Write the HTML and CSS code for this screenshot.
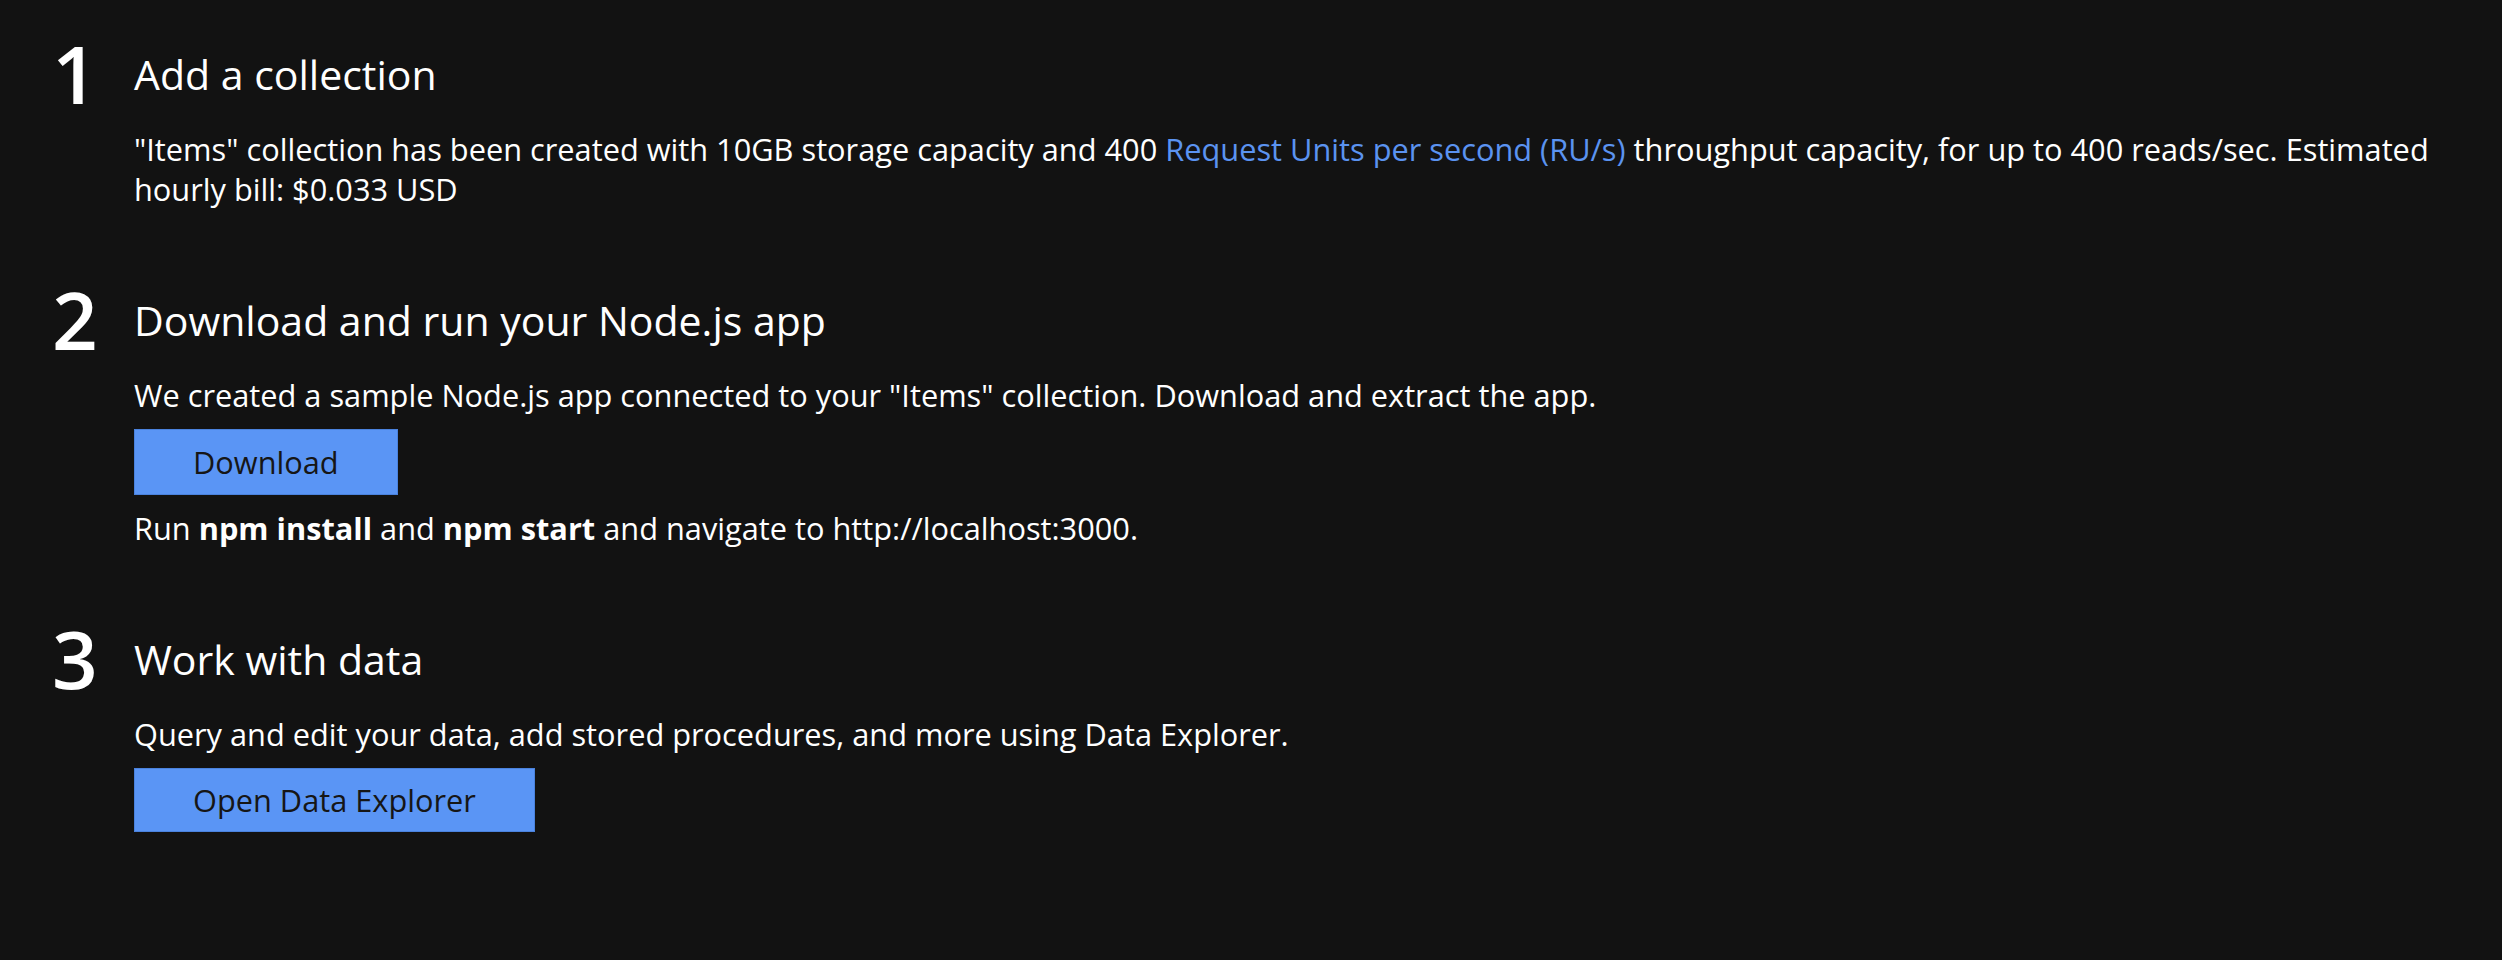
FILE: index.html
```html
<!DOCTYPE html>
<html lang="en">
<head>
<meta charset="utf-8">
<title>Quick start</title>
<link rel="stylesheet" href="styles.css">
</head>
<body>
<main class="page">
  <section class="step">
    <div class="num">1</div>
    <div class="content">
      <h2 class="title">Add a collection</h2>
      <p class="text">"Items" collection has been created with 10GB storage capacity and 400 <a class="link" href="#">Request Units per second (RU/s)</a> throughput capacity, for up to 400 reads/sec. Estimated hourly bill: $0.033 USD</p>
    </div>
  </section>
  <section class="step">
    <div class="num">2</div>
    <div class="content">
      <h2 class="title">Download and run your Node.js app</h2>
      <p class="text">We created a sample Node.js app connected to your "Items" collection. Download and extract the app.</p>
      <button class="btn btn-download" type="button">Download</button>
      <p class="text text-after">Run <strong class="strong">npm install</strong> and <strong class="strong">npm start</strong> and navigate to http://localhost:3000.</p>
    </div>
  </section>
  <section class="step">
    <div class="num">3</div>
    <div class="content">
      <h2 class="title">Work with data</h2>
      <p class="text">Query and edit your data, add stored procedures, and more using Data Explorer.</p>
      <button class="btn btn-explorer" type="button">Open Data Explorer</button>
    </div>
  </section>
</main>
</body>
</html>
```
FILE: styles.css
```css
html, body {
  margin: 0;
  padding: 0;
  background: #121212;
}

body {
  font-family: "Open Sans", "Noto Sans", sans-serif;
  color: #ffffff;
  width: 2502px;
  height: 960px;
  overflow: hidden;
}

.page {
  display: flex;
  flex-direction: column;
  gap: 70px;
  padding: 33px 50px 0 52px;
}

.step {
  display: grid;
  grid-template-columns: 82px 1fr;
  align-items: start;
}

.num {
  font-size: 80px;
  line-height: 80px;
  font-weight: 600;
  color: #ffffff;
}

.content {
  display: flex;
  flex-direction: column;
  align-items: flex-start;
  padding-top: 16px;
}

.title {
  margin: 0;
  font-size: 41px;
  line-height: 50px;
  font-weight: 400;
  color: #ffffff;
}

.text {
  margin: 30px 0 0 0;
  font-size: 30.75px;
  line-height: 40px;
  font-weight: 400;
  color: #ffffff;
}

.text-after {
  margin-top: 13px;
}

.link {
  color: #5b93f0;
  text-decoration: none;
}

.strong {
  font-weight: 700;
}

.btn {
  margin-top: 14px;
  font-family: "Open Sans", "Noto Sans", sans-serif;
  font-size: 30.75px;
  line-height: 40px;
  color: #161616;
  background: #5a95f5;
  border: 1px solid #4a82dd;
  border-radius: 0;
  padding: 12px 58px;
  cursor: pointer;
}

.btn-explorer {
  padding: 11px 58px 11px;
  margin-top: 14px;
}
```
